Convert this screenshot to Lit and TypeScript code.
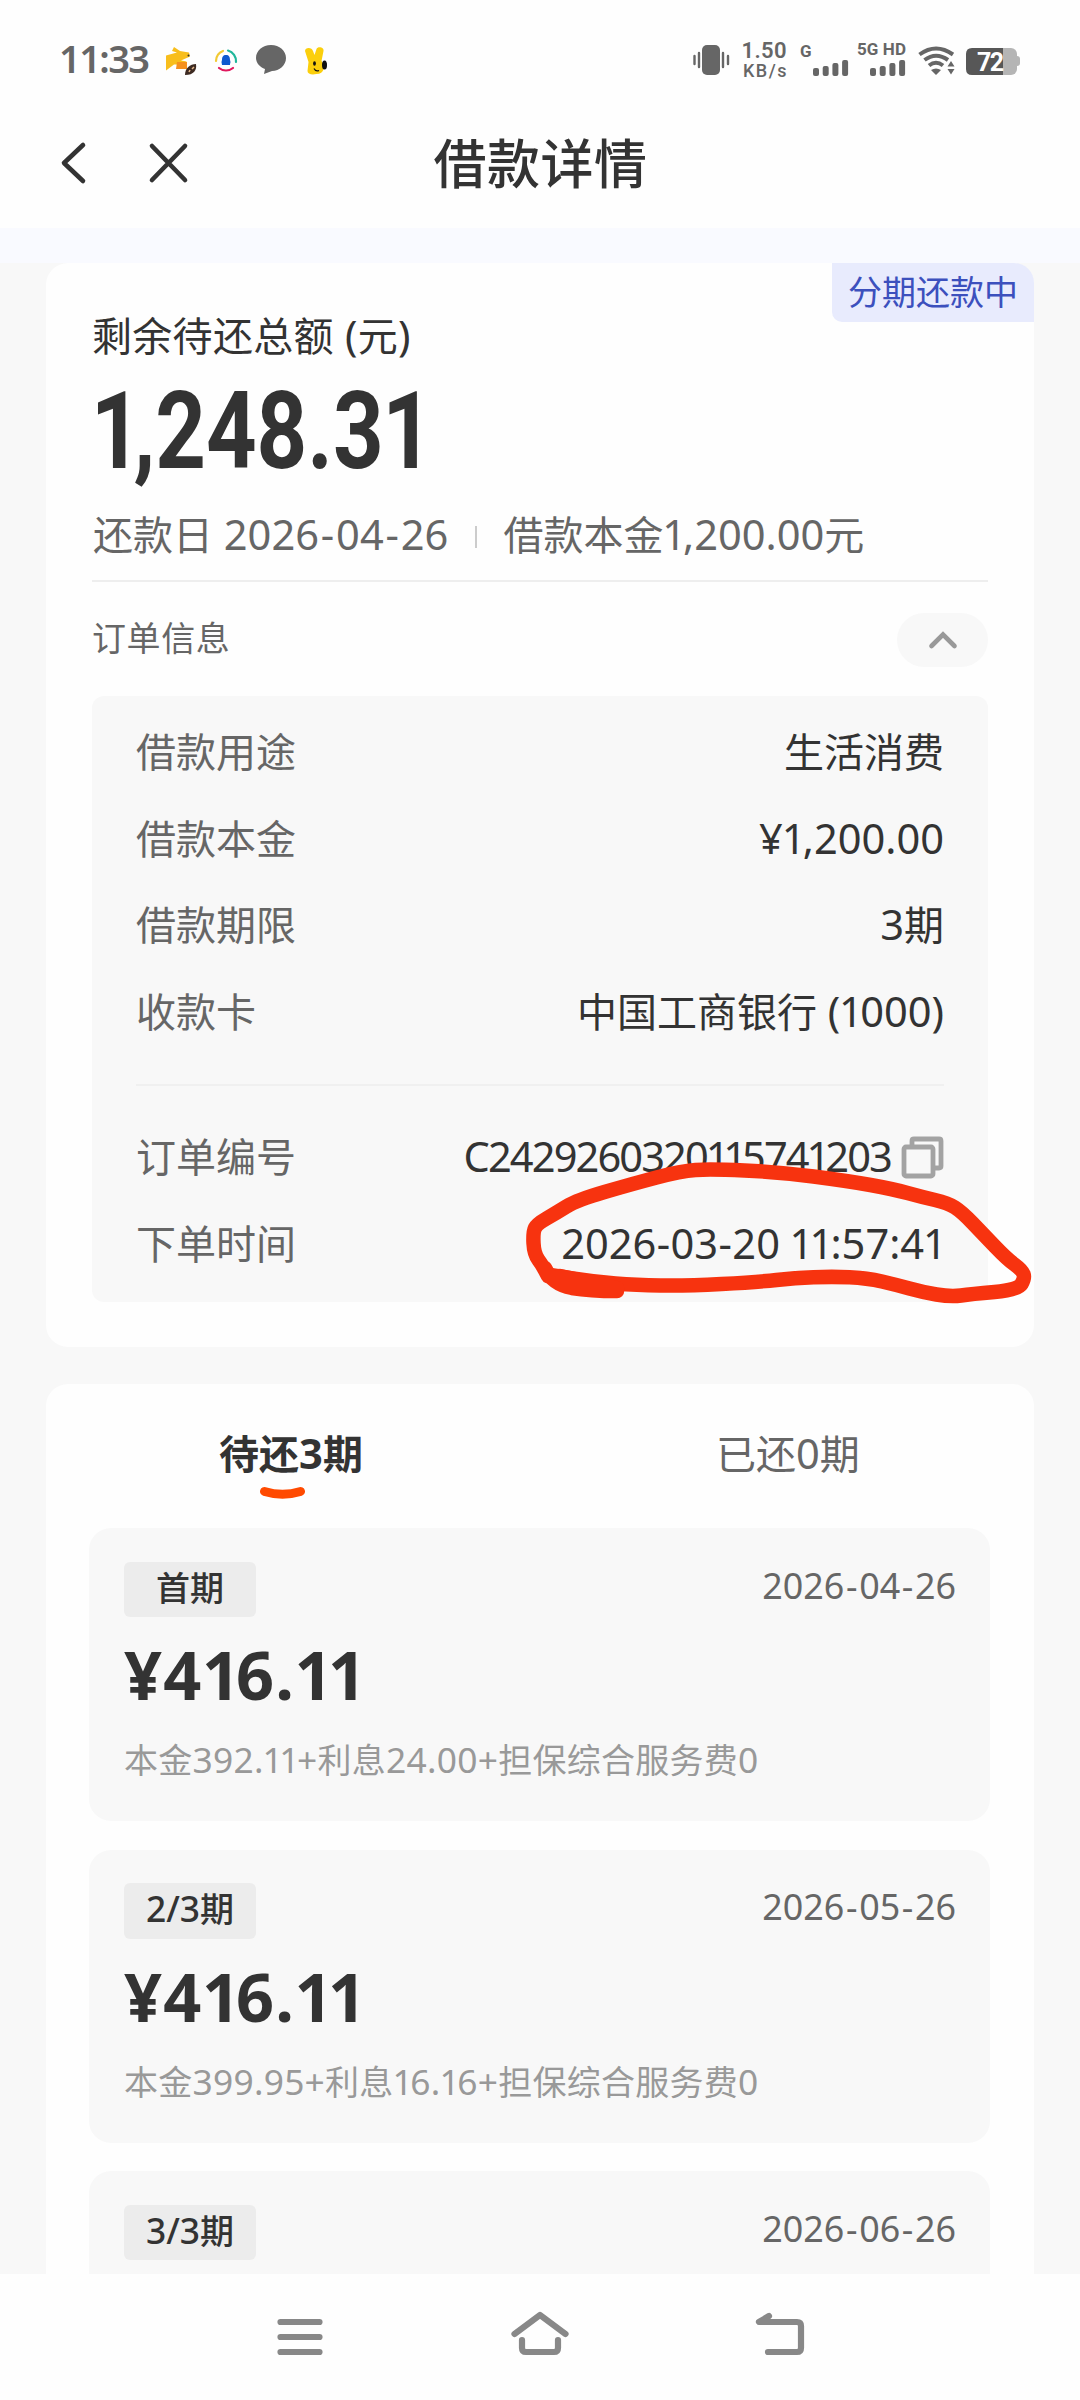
import { LitElement, html, css, svg } from "lit";
import { customElement, property } from "lit/decorators.js";

const glyph = (p: string) =>
  p === "1" ? html`<span class="one">1</span>` : p === "-" ? html`<span class="dash">-</span>` : p;

/** Splits a string so that Latin runs, the narrow digit 1 and the wide dash get their own metrics. */
const mix = (text: string) =>
  text.split(/([\x20-\x7e¥]+)/).map((run) =>
    /^[\x20-\x7e¥]+$/.test(run) ? html`<span class="n">${run.split(/([1-])/).map(glyph)}</span>` : run
  );

const numerals = css`
  .n {
    font-family: "Noto Sans", "Noto Sans CJK SC", sans-serif;
    font-size: 1.04em;
    line-height: 0;
    white-space: pre;
  }
  .one {
    letter-spacing: -0.07em;
    margin-left: -0.03em;
  }
  .dash {
    padding: 0 0.045em;
  }
`;

type Pt = [number, number];

const loop: Pt[] = [
  [548, 1276], [543, 1266], [534, 1254], [533, 1232], [537, 1224], [556, 1213], [577, 1200], [632, 1184], [681, 1171],
  [710, 1169], [779, 1172], [848, 1181], [893, 1189], [922, 1197], [948, 1203], [962, 1212],
  [983, 1234], [1007, 1259], [1022, 1270], [1025, 1278], [1018, 1290], [971, 1294], [951, 1297],
  [922, 1292], [897, 1285], [867, 1278], [832, 1276.5], [795, 1278], [758, 1282], [685, 1286],
  [636, 1285], [595, 1282], [550, 1275],
];

/** Smooth open stroke through a list of points. */
const smooth = (pts: Pt[]) => {
  let d = `M${pts[0][0]} ${pts[0][1]}`;
  for (let i = 1; i < pts.length - 1; i++) {
    const [x, y] = pts[i];
    const [nx, ny] = pts[i + 1];
    d += ` Q${x} ${y} ${(x + nx) / 2} ${(y + ny) / 2}`;
  }
  const last = pts[pts.length - 1];
  return `${d} L${last[0]} ${last[1]}`;
};

@customElement("status-bar")
class StatusBar extends LitElement {
  static styles = css`
    :host {
      display: flex;
      justify-content: space-between;
      height: 100px;
      padding: 20px 40px 0;
      box-sizing: border-box;
    }
    svg {
      display: block;
    }
    text {
      font-family: "Noto Sans", sans-serif;
      fill: #666;
    }
    .time {
      font-size: 38px;
      font-weight: 600;
    }
    text.rate {
      font-family: Roboto, sans-serif;
      font-size: 22px;
      font-weight: 600;
    }
    text.unit {
      font-family: Roboto, sans-serif;
      font-size: 18px;
      font-weight: 500;
    }
    text.net {
      font-family: Roboto, sans-serif;
      font-size: 17px;
      font-weight: 700;
    }
    text.level {
      font-family: Roboto, sans-serif;
      font-size: 25px;
      font-weight: 700;
      fill: #fff;
    }
  `;
  render() {
    const bars = (x: number) =>
      [8, 10, 13, 16].map(
        (h, i) => svg`<rect x=${x + i * 9.7} y=${56 - h} width="6" height=${h} rx="2" />`
      );
    return html`
      <svg width="320" height="80" viewBox="0 0 320 80">
        <text class="time" x="19" y="53" textLength="91">11:33</text>
        <path d="M134 27l6 4 9 1.500 1 4-9 4 6 1-9 3h-4l-8 6v-15l11-3-5-1.500z" fill="#f8be1c" />
        <path d="M137 42h10v7h-11z" fill="#f5901e" />
        <circle cx="148.500" cy="35.500" r="1" fill="#333" />
        <path d="M145 55c0-7 5-11 11-11 1 6-2 11-11 11z" fill="#3d2a22" />
        <path d="M149 52l1-2M152 49l2-2" stroke="#e6b98c" stroke-width="1.500" />
        <g fill="none" stroke-width="2.200" stroke-linecap="round">
          <path d="M176 41A11 11 0 0 1 183 31" stroke="#f2ca35" />
          <path d="M188 30.500A11 11 0 0 1 196 42" stroke="#20b79b" />
          <path d="M179 48A11 11 0 0 0 193 48" stroke="#e0185e" />
        </g>
        <path d="M182 45c0-2-1-2 0-5 0-3 1-5 4-5s4 2 4 5c1 3 0 3 0 5z" fill="#0e58cf" />
        <path d="M231 25c8.500 0 15 5.800 15 13s-6.500 13-14 13l-8 3 1-5c-5-2-9-6-9-11 0-7.200 6.500-13 15-13z" fill="#666" />
        <path d="M265 31c0-4 7-4 8 0l1.500 4 2-6c1-3 8-2 7 2l-2 10c4 5 3 13-5 13-5 1-9 0-9-3l1-9z" fill="#fbcf0c" />
        <ellipse cx="284.500" cy="45" rx="2.500" ry="4.500" fill="#111" />
        <ellipse cx="274.500" cy="43.500" rx="1.400" ry="2.200" fill="#111" />
        <path d="M274 48.500c1 2 3 3 5 2" stroke="#111" fill="none" stroke-width="1.200" />
      </svg>
      <svg width="360" height="80" viewBox="0 0 360 80" fill="#666">
        <rect x="22" y="25" width="18" height="30" rx="5" />
        <path d="M14.500 36v8M19 33v14M43 33v14M48 36v8" stroke="#666" stroke-width="2.400" stroke-linecap="round" />
        <text class="rate" x="61.500" y="37.500" textLength="45">1.50</text>
        <text class="unit" x="63" y="56.500" textLength="43.500">KB/s</text>
        <text class="net" x="120" y="36.500">G</text>
        <g>${bars(133)}</g>
        <text class="net" x="177" y="35" textLength="49">5G HD</text>
        <g>${bars(190)}</g>
        <g fill="none" stroke="#666" stroke-width="4">
          <path d="M239.500 34.500Q256 22.500 273 34.500" />
          <path d="M244.500 40Q256 31.500 268 40" />
          <path d="M249 45.500Q256 40 263 45.500" />
        </g>
        <path d="M251 50q5-3 10 0l-5 5zM271 41l3.500 5.500h-7zM267.500 49h7l-3.500 5.500z" />
        <rect x="330" y="36" width="10" height="10" rx="3" fill="#b5b5b5" />
        <rect x="303" y="28" width="34" height="27" rx="6" fill="#b5b5b5" />
        <path d="M303 28h-11q-6 0-6 6v15q0 6 6 6h11z" fill="#575757" />
        <rect x="300" y="28" width="23" height="27" fill="#575757" />
        <text class="level" x="297" y="51" textLength="27">72</text>
      </svg>
    `;
  }
}

@customElement("info-row")
class InfoRow extends LitElement {
  @property() label = "";
  @property() value = "";
  @property({ type: Boolean }) copy = false;
  static styles = [
    numerals,
    css`
      :host {
        display: flex;
        justify-content: space-between;
        align-items: center;
        height: 86.5px;
        line-height: 60px;
        font-size: 40px;
        color: #333;
      }
      .label {
        color: #666;
      }
      .value {
        display: flex;
        align-items: center;
        gap: 9px;
      }
      .plain .dash {
        padding: 0 0.01em;
      }
      .plain .one {
        letter-spacing: -0.065em;
      }
      .order {
        letter-spacing: -1.9px;
      }
      .order .one {
        letter-spacing: -0.12em;
      }
      svg {
        display: block;
        margin-top: 4px;
      }
    `,
  ];
  render() {
    return html`
      <span class="label">${this.label}</span>
      <span class="value">
        <span class=${this.copy ? "order" : "plain"}>${mix(this.value)}</span>
        ${this.copy
          ? html`<svg width="44" height="44" viewBox="0 0 44 44" fill="none" stroke="#a3a3a3" stroke-width="4.800">
              <rect x="4" y="12" width="29" height="29" rx="2" />
              <path d="M12 11V6q0-2 2-2h25q2 0 2 2v25q0 2-2 2h-5" />
            </svg>`
          : ""}
      </span>
    `;
  }
}

@customElement("installment-card")
class InstallmentCard extends LitElement {
  @property() term = "";
  @property() date = "";
  @property() amount = "";
  @property() detail = "";
  static styles = [
    numerals,
    css`
      :host {
        display: flex;
        flex-direction: column;
        height: 293px;
        flex: none;
        box-sizing: border-box;
        padding: 33.5px 34px 0 35px;
        border-radius: 22px;
        background: #f8f8f8;
      }
      .top {
        display: flex;
        justify-content: space-between;
        height: 55.5px;
      }
      .tag {
        width: 132px;
        text-align: center;
        font-size: 34px;
        line-height: 50px;
        font-weight: 500;
        border-radius: 6px;
        background: #ececec;
      }
      .date {
        font-size: 34.5px;
        line-height: 45px;
        color: #666;
      }
      .amount {
        margin-top: 10px;
        height: 90px;
        font-size: 64px;
        line-height: 90px;
        font-weight: 700;
        letter-spacing: 1.2px;
      }
      .amount .one {
        letter-spacing: -0.06em;
        margin-left: -0.01em;
      }
      .detail {
        font-size: 34px;
        line-height: 50px;
        margin-top: 17px;
        letter-spacing: 0.25px;
        color: #999;
      }
    `,
  ];
  render() {
    return html`
      <div class="top">
        <span class="tag">${mix(this.term)}</span>
        <span class="date">${mix(this.date)}</span>
      </div>
      <div class="amount">${mix(this.amount)}</div>
      <div class="detail">${mix(this.detail)}</div>
    `;
  }
}

@customElement("app-root")
class AppRoot extends LitElement {
  static styles = [
    numerals,
    css`
      :host {
        display: flex;
        flex-direction: column;
        position: relative;
        width: 1080px;
        height: 2400px;
        overflow: hidden;
        background: #f8f8f8;
        color: #333;
        font-family: "Noto Sans CJK SC", sans-serif;
      }
      svg {
        display: block;
      }
      .head {
        flex: none;
        height: 228px;
        background: #fefefe;
      }
      .nav {
        display: grid;
        grid-template-columns: 1fr auto 1fr;
        align-items: center;
        height: 126px;
      }
      .title {
        font-size: 53px;
        line-height: 80px;
        font-weight: 500;
        letter-spacing: 0.5px;
        padding: 0 0 4px 1px;
      }
      .band {
        flex: none;
        height: 35px;
        background: #f9faff;
      }
      .body {
        flex: 1;
        min-height: 0;
        overflow: hidden;
        display: flex;
        flex-direction: column;
        gap: 37px;
        padding: 0 46px;
        background: #f8f8f8;
      }
      .card {
        flex: none;
        box-sizing: border-box;
        border-radius: 22px;
        background: #fefefe;
      }
      .summary {
        position: relative;
        height: 1084px;
        padding: 43px 46px 0;
      }
      .badge {
        position: absolute;
        top: 0;
        right: 0;
        height: 59px;
        padding: 0 16px;
        font-size: 34px;
        line-height: 55px;
        color: #3c50bd;
        background: #e8ebfd;
        border-radius: 0 20px 0 10px;
      }
      .caption {
        font-size: 40px;
        line-height: 56px;
        letter-spacing: 0.3px;
      }
      .total {
        height: 130px;
        line-height: 130px;
        font-family: Roboto, sans-serif;
        font-size: 107px;
        font-weight: 700;
        transform: scaleX(0.826);
        transform-origin: left;
        padding-top: 5px;
        box-sizing: border-box;
      }
      .total .one {
        letter-spacing: -0.09em;
        margin-left: -0.015em;
      }
      .dates {
        display: flex;
        align-items: center;
        height: 88px;
        font-size: 40px;
        color: #666;
        border-bottom: 2px solid #eee;
        padding-left: 1px;
      }
      .dates span {
        margin-top: -6px;
      }
      .dates .n,
      .dates .one,
      .dates .dash {
        margin-top: 0;
      }
      .dates .bar {
        width: 2px;
        height: 22px;
        margin: 2px 26px 0 27px;
        background: #ccc;
      }
      .section {
        display: flex;
        justify-content: space-between;
        align-items: center;
        height: 114px;
        font-size: 34px;
        letter-spacing: 0.6px;
        color: #666;
      }
      .section span {
        padding-bottom: 6px;
      }
      .pill {
        display: grid;
        place-items: center;
        width: 91px;
        height: 54px;
        margin-top: 2px;
        border-radius: 27px;
        background: #f8f8f8;
      }
      .box {
        height: 606px;
        box-sizing: border-box;
        padding: 11px 44px 0;
        border-radius: 12px;
        background: #f8f8f8;
      }
      .rule {
        height: 2px;
        margin: 31px 0 26px;
        background: #f0f0f0;
      }
      .plan {
        height: 1100px;
        padding: 0 44px 0 43px;
        display: flex;
        flex-direction: column;
        gap: 28.5px;
      }
      .tabs {
        display: grid;
        grid-template-columns: 404px 1fr;
        height: 115.5px;
        flex: none;
        padding-top: 36px;
        box-sizing: border-box;
        font-size: 40px;
        line-height: 64px;
        text-align: center;
        color: #666;
      }
      .active {
        color: #333;
        font-weight: 700;
      }
      .active svg {
        margin: 2px 0 0 168px;
      }
      .done {
        padding-left: 223px;
        text-align: left;
      }
      .keys {
        flex: none;
        display: flex;
        justify-content: center;
        height: 126px;
        background: #fefefe;
      }
      .mark {
        position: absolute;
        left: 0;
        top: 0;
        pointer-events: none;
      }
    `,
  ];
  render() {
    return html`
      <div class="head">
        <status-bar></status-bar>
        <div class="nav">
          <svg width="200" height="60" viewBox="0 0 200 60" fill="none" stroke="#333" stroke-width="4.600" stroke-linecap="round" stroke-linejoin="round">
            <path d="M83 12L64 30l19 18M152 13l33 34M185 13l-33 34" />
          </svg>
          <div class="title">借款详情</div>
          <div></div>
        </div>
      </div>
      <div class="band"></div>
      <div class="body">
        <div class="card summary">
          <div class="badge">分期还款中</div>
          <div class="caption">${mix("剩余待还总额 (元)")}</div>
          <div class="total"><span class="one">1</span>,248.3<span class="one">1</span></div>
          <div class="dates">
            <span>${mix("还款日 2026-04-26")}</span>
            <span class="bar"></span>
            <span>${mix("借款本金1,200.00元")}</span>
          </div>
          <div class="section">
            <span>订单信息</span>
            <div class="pill">
              <svg width="32" height="20" viewBox="0 0 32 20" fill="none" stroke="#999" stroke-width="4.600" stroke-linecap="round">
                <path d="M4.500 16L16 4.500 27.500 16" />
              </svg>
            </div>
          </div>
          <div class="box">
            <info-row label="借款用途" value="生活消费"></info-row>
            <info-row label="借款本金" value="¥1,200.00"></info-row>
            <info-row label="借款期限" value="3期"></info-row>
            <info-row label="收款卡" value="中国工商银行 (1000)"></info-row>
            <div class="rule"></div>
            <info-row label="订单编号" value="C2429260320115741203" copy></info-row>
            <info-row label="下单时间" value="2026-03-20 11:57:41"></info-row>
          </div>
        </div>
        <div class="card plan">
          <div class="tabs">
            <div class="active">
              ${mix("待还3期")}
              <svg width="52" height="18" viewBox="0 0 52 18">
                <path d="M7.500 5.500Q25.500 11 43.500 5.500" fill="none" stroke="#ff4a00" stroke-width="9" stroke-linecap="round" />
              </svg>
            </div>
            <div class="done">${mix("已还0期")}</div>
          </div>
          <installment-card term="首期" date="2026-04-26" amount="¥416.11" detail="本金392.11+利息24.00+担保综合服务费0"></installment-card>
          <installment-card term="2/3期" date="2026-05-26" amount="¥416.11" detail="本金399.95+利息16.16+担保综合服务费0"></installment-card>
          <installment-card term="3/3期" date="2026-06-26"></installment-card>
        </div>
      </div>
      <div class="keys">
        <svg width="600" height="126" viewBox="0 4 600 126" fill="none" stroke="#888" stroke-width="6.200" stroke-linecap="round" stroke-linejoin="round">
          <path d="M40.500 52h39M40.500 67h39M40.500 82h39" />
          <path d="M274.500 64L300 45l25.500 19M282 70v8q0 4 4 4h28q4 0 4-4v-8" />
          <path d="M529 46l-10 6h38q4 0 4 4v22q0 4-4 4h-29" />
        </svg>
      </div>
      <svg class="mark" width="1080" height="2400" viewBox="0 0 1080 2400" fill="none" stroke="#f7330f" stroke-width="14.500" stroke-linecap="round" stroke-linejoin="round">
        <path d=${smooth(loop)} />
        <path d="M545 1268Q552 1284 572 1288Q590 1291 617 1291L617 1288L560 1276" fill="#f7330f" />
      </svg>
    `;
  }
}
